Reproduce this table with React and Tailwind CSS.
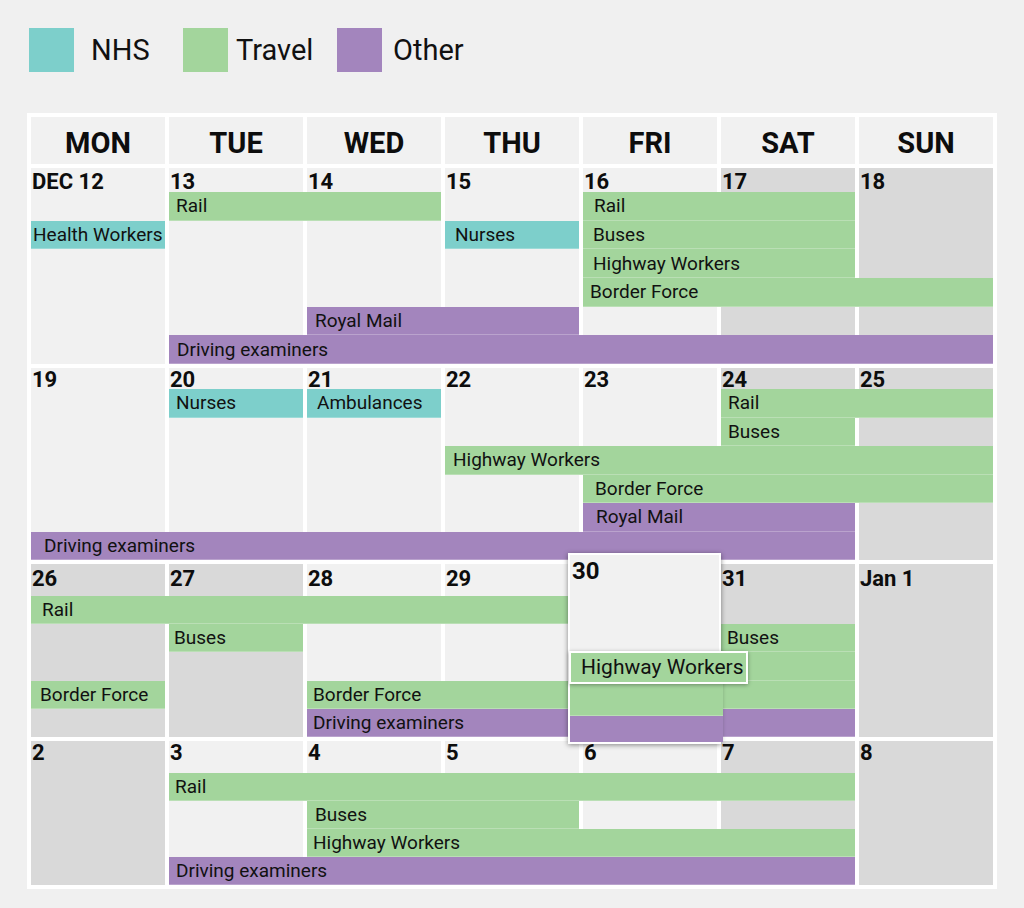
const COL_START = ["col-start-1", "col-start-2", "col-start-3", "col-start-4", "col-start-5", "col-start-6", "col-start-7"];
const COL_SPAN = ["col-span-1", "col-span-2", "col-span-3", "col-span-4", "col-span-5", "col-span-6", "col-span-7"];
const ROW_START = ["row-start-1", "row-start-2", "row-start-3", "row-start-4", "row-start-5", "row-start-6", "row-start-7"];

const COLORS = {
  nhs: "bg-[#7dcfcb]",
  travel: "bg-[#a3d59c]",
  other: "bg-[#a385bd]",
};

const DAYS = ["MON", "TUE", "WED", "THU", "FRI", "SAT", "SUN"];

const weeks = [
  {
    rows: "grid-rows-[24px_repeat(6,1fr)] h-[196px]",
    labelPad: "pt-[2px]",
    dates: ["DEC 12", "13", "14", "15", "16", "17", "18"],
    weekend: [5, 6],
    events: [
      { label: "Rail", type: "travel", col: 1, span: 2, lane: 1, pl: "pl-[7px]" },
      { label: "Rail", type: "travel", col: 4, span: 2, lane: 1, pl: "pl-[11px]" },
      { label: "Health Workers", type: "nhs", col: 0, span: 1, lane: 2, pl: "pl-[2px]" },
      { label: "Nurses", type: "nhs", col: 3, span: 1, lane: 2, pl: "pl-[10px]" },
      { label: "Buses", type: "travel", col: 4, span: 2, lane: 2, pl: "pl-[10px]" },
      { label: "Highway Workers", type: "travel", col: 4, span: 2, lane: 3, pl: "pl-[10px]" },
      { label: "Border Force", type: "travel", col: 4, span: 3, lane: 4, pl: "pl-[7px]" },
      { label: "Royal Mail", type: "other", col: 2, span: 2, lane: 5, pl: "pl-[8px]" },
      { label: "Driving examiners", type: "other", col: 1, span: 6, lane: 6, pl: "pl-[8px]" },
    ],
  },
  {
    rows: "grid-rows-[21px_repeat(6,1fr)] h-[192px]",
    labelPad: "pt-0",
    dates: ["19", "20", "21", "22", "23", "24", "25"],
    weekend: [5, 6],
    events: [
      { label: "Nurses", type: "nhs", col: 1, span: 1, lane: 1, pl: "pl-[7px]" },
      { label: "Ambulances", type: "nhs", col: 2, span: 1, lane: 1, pl: "pl-[10px]" },
      { label: "Rail", type: "travel", col: 5, span: 2, lane: 1, pl: "pl-[7px]" },
      { label: "Buses", type: "travel", col: 5, span: 1, lane: 2, pl: "pl-[7px]" },
      { label: "Highway Workers", type: "travel", col: 3, span: 4, lane: 3, pl: "pl-[8px]" },
      { label: "Border Force", type: "travel", col: 4, span: 3, lane: 4, pl: "pl-[12px]" },
      { label: "Royal Mail", type: "other", col: 4, span: 2, lane: 5, pl: "pl-[13px]" },
      { label: "Driving examiners", type: "other", col: 0, span: 6, lane: 6, pl: "pl-[13px]" },
    ],
  },
  {
    rows: "grid-rows-[32px_repeat(5,1fr)] h-[173px]",
    labelPad: "pt-[3px]",
    dates: ["26", "27", "28", "29", "", "31", "Jan 1"],
    weekend: [0, 1, 5, 6],
    events: [
      { label: "Rail", type: "travel", col: 0, span: 4, lane: 1, pl: "pl-[11px]" },
      { label: "Buses", type: "travel", col: 1, span: 1, lane: 2, pl: "pl-[5px]" },
      { label: "Buses", type: "travel", col: 5, span: 1, lane: 2, pl: "pl-[6px]" },
      { label: "", type: "travel", col: 4, span: 2, lane: 3, pl: "pl-2" },
      { label: "Border Force", type: "travel", col: 0, span: 1, lane: 4, pl: "pl-[9px]" },
      { label: "Border Force", type: "travel", col: 2, span: 4, lane: 4, pl: "pl-[6px]" },
      { label: "Driving examiners", type: "other", col: 2, span: 4, lane: 5, pl: "pl-[6px]" },
    ],
  },
  {
    rows: "grid-rows-[32px_repeat(4,1fr)] h-[144px]",
    labelPad: "pt-0",
    dates: ["2", "3", "4", "5", "6", "7", "8"],
    weekend: [0, 5, 6],
    events: [
      { label: "Rail", type: "travel", col: 1, span: 5, lane: 1, pl: "pl-[6px]" },
      { label: "Buses", type: "travel", col: 2, span: 2, lane: 2, pl: "pl-[8px]" },
      { label: "Highway Workers", type: "travel", col: 2, span: 4, lane: 3, pl: "pl-[6px]" },
      { label: "Driving examiners", type: "other", col: 1, span: 5, lane: 4, pl: "pl-[7px]" },
    ],
  },
];

function Legend() {
  const items = [
    { label: "NHS", color: COLORS.nhs, gap: "gap-[17px]" },
    { label: "Travel", color: COLORS.travel, gap: "gap-[8px]" },
    { label: "Other", color: COLORS.other, gap: "gap-[11px]" },
  ];
  return (
    <div className="flex pl-[29px] pt-[28px]">
      {items.map((item) => (
        <div key={item.label} className={`flex w-[154px] items-center ${item.gap}`}>
          <div className={`h-[44px] w-[45px] ${item.color}`} />
          <span className="text-[29px] leading-none text-[#111]">{item.label}</span>
        </div>
      ))}
    </div>
  );
}

function Week({ week, children }) {
  return (
    <div className={`relative grid grid-cols-7 gap-x-1 ${week.rows}`}>
      {week.dates.map((d, i) => (
        <div
          key={i}
          className={`${COL_START[i]} row-span-full ${week.weekend.includes(i) ? "bg-[#d9d9d9]" : "bg-[#f1f1f1]"}`}
        >
          <div className={`pl-[1px] text-[22px] font-bold leading-6 text-[#0d0d0d] ${week.labelPad}`}>{d}</div>
        </div>
      ))}
      {week.events.map((ev, i) => (
        <div
          key={i}
          className={`${COL_START[ev.col]} ${COL_SPAN[ev.span - 1]} ${ROW_START[ev.lane]} flex items-center border-b border-white/25 ${COLORS[ev.type]} ${ev.pl} text-[19px] leading-none text-[#111]`}
        >
          {ev.label}
        </div>
      ))}
      {children}
    </div>
  );
}

function HoverCell() {
  return (
    <div className="absolute left-[537px] top-[-11px] z-10 flex h-[191px] w-[153px] flex-col border-2 border-white bg-[#f1f1f1] shadow-[0_1px_5px_rgba(0,0,0,0.45)]">
      <div className="h-[96px] pl-[2px] pt-[2px] text-[24px] font-bold leading-7 text-[#0d0d0d]">30</div>
      <div className="relative z-10 -ml-[1px] flex h-[33px] w-[179px] items-center border-2 border-white bg-[#a3d59c] pl-[10px] text-[21px] leading-none text-[#111] shadow-[0_1px_4px_rgba(0,0,0,0.35)]">
        Highway Workers
      </div>
      <div className="h-[32px] w-[153px] border-b border-white/25 bg-[#a3d59c]" />
      <div className="h-[26px] w-[153px] bg-[#a385bd]" />
    </div>
  );
}

export default function App() {
  return (
    <div className="min-h-[908px] w-[1024px] bg-[#f0f0f0] font-['Roboto',sans-serif]">
      <Legend />
      <div className="ml-[27px] mt-[41px] flex w-[970px] flex-col gap-1 bg-white p-1">
        <div className="grid grid-cols-7 gap-x-1">
          {DAYS.map((d) => (
            <div key={d} className="flex h-[47px] items-center justify-center bg-[#f1f1f1] pt-[6px] text-[29px] font-bold text-[#0d0d0d]">
              {d}
            </div>
          ))}
        </div>
        {weeks.map((week, i) => (
          <Week key={i} week={week}>
            {i === 2 && <HoverCell />}
          </Week>
        ))}
      </div>
    </div>
  );
}
